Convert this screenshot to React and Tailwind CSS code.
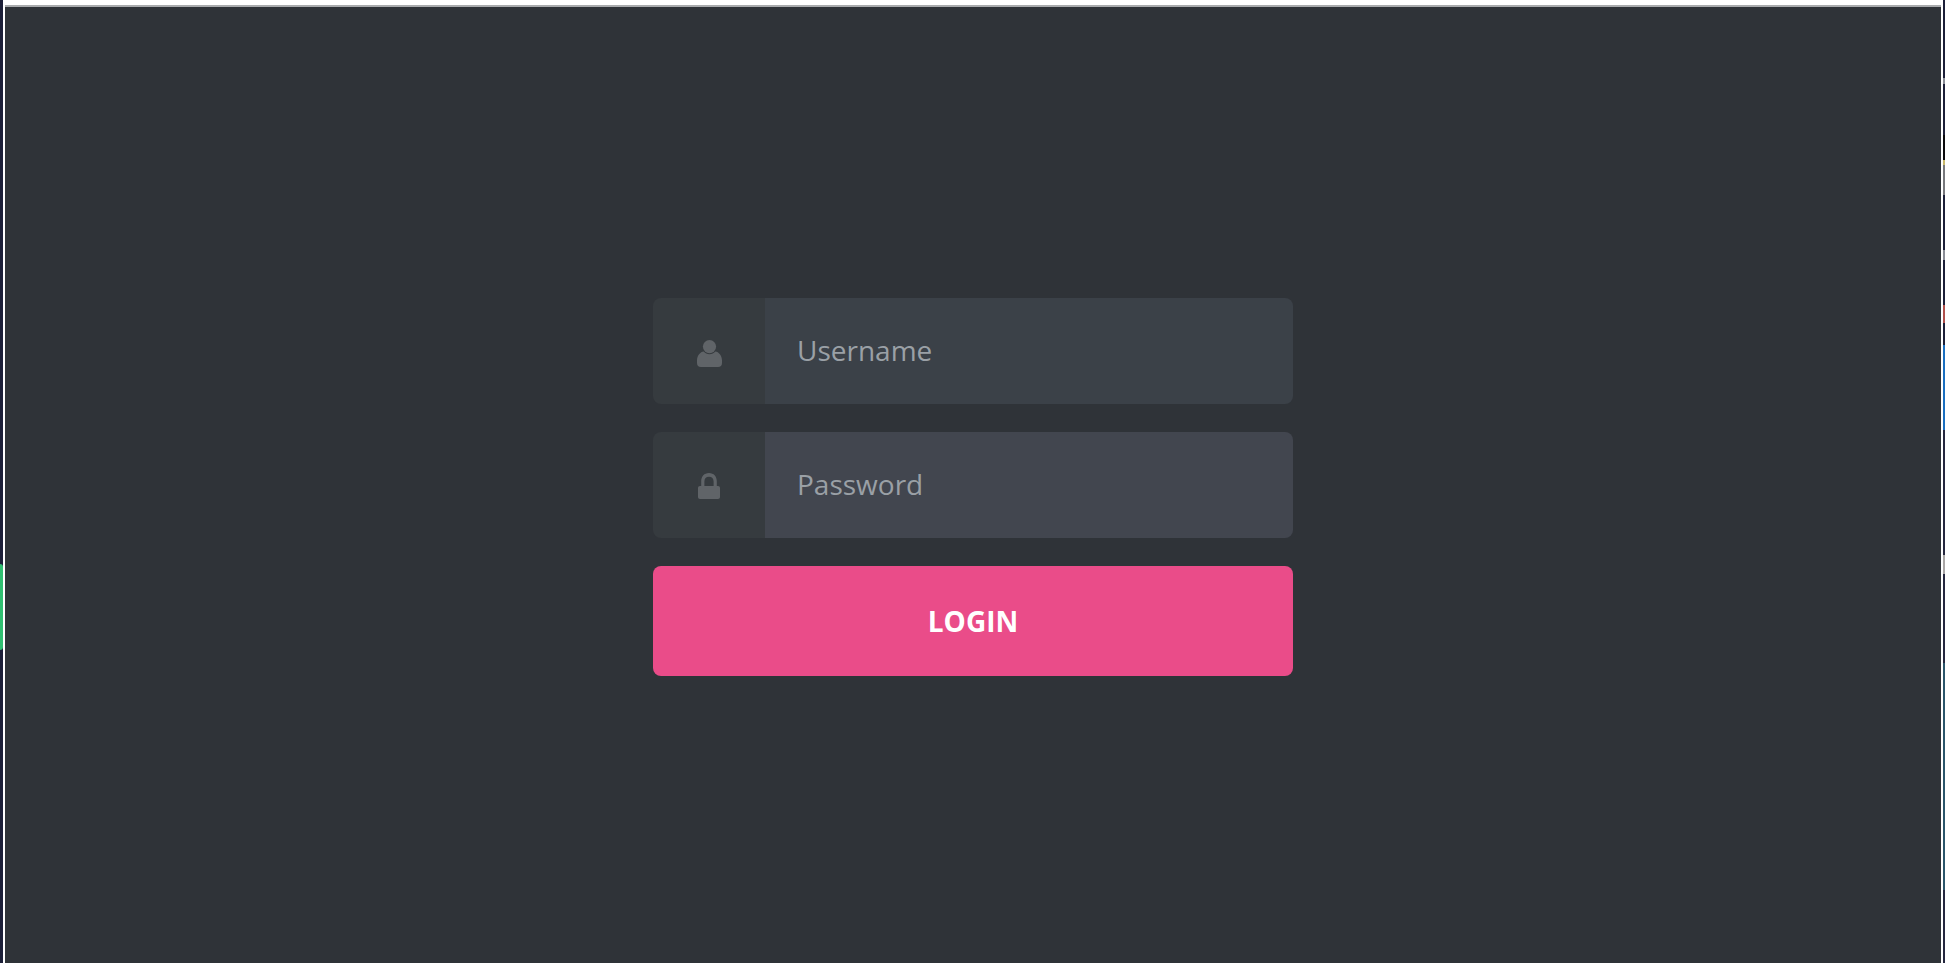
const rightStrip = [
  ["h-[78px]", "bg-[#1c1f38]"],
  ["h-[6px]", "bg-[#8a8d96]"],
  ["h-[51px]", "bg-[#1c1f38]"],
  ["h-[25px]", "bg-[#0a0a0c]"],
  ["h-[5px]", "bg-[#c9b96a]"],
  ["h-[30px]", "bg-[#77787c]"],
  ["h-[55px]", "bg-[#1c1f38]"],
  ["h-[10px]", "bg-[#8a8d96]"],
  ["h-[45px]", "bg-[#1c1f38]"],
  ["h-[18px]", "bg-[#b0504c]"],
  ["h-[22px]", "bg-[#1c1f38]"],
  ["h-[85px]", "bg-[#1b6fc0]"],
  ["h-[125px]", "bg-[#25273f]"],
  ["h-[19px]", "bg-[#a9a6a6]"],
  ["h-[89px]", "bg-[#25273f]"],
  ["h-[227px]", "bg-[#2c566b]"],
  ["h-[73px]", "bg-[#25273f]"],
];

function UserIcon() {
  return (
    <svg width="25" height="27" viewBox="0 0 25 27" className="text-[#606468] mt-[4px]" fill="currentColor">
      <circle cx="12.5" cy="6.6" r="6.6" />
      <path d="M0 20.5C0 15.6 3.4 12 6.6 11.6C8 13.2 10.2 14.2 12.5 14.2C14.8 14.2 17 13.2 18.4 11.6C21.6 12 25 15.6 25 20.5V23C25 25.6 23.6 27 21 27H4C1.4 27 0 25.6 0 23Z" />
    </svg>
  );
}

function LockIcon() {
  return (
    <svg width="22" height="26" viewBox="0 0 22 26" className="text-[#606468] mt-[1px]" fill="currentColor">
      <path
        fillRule="evenodd"
        d="M11 0C6.2 0 3.2 3.6 3.2 8V13H2C0.8 13 0 13.8 0 15V24C0 25.2 0.8 26 2 26H20C21.2 26 22 25.2 22 24V15C22 13.8 21.2 13 20 13H18.8V8C18.8 3.6 15.8 0 11 0ZM11 3.8C14 3.8 15.6 5.8 15.6 8.6V13H6.4V8.6C6.4 5.8 8 3.8 11 3.8Z"
      />
    </svg>
  );
}

function Field({ icon, placeholder, type, inputBg }) {
  return (
    <div className="flex h-[106px] rounded-[8px] overflow-hidden">
      <div className="w-[112px] bg-[#363b3f] flex items-center justify-center">
        {icon}
      </div>
      <input
        type={type}
        placeholder={placeholder}
        className={`flex-1 min-w-0 pl-[32px] pb-[3px] text-[28px] text-[#9aa0a6] placeholder:text-[#9aa0a6] outline-none ${inputBg}`}
      />
    </div>
  );
}

export default function App() {
  return (
    <div className="flex h-[963px] w-full overflow-hidden bg-[#2f3338] font-['Open_Sans',sans-serif]">
      {/* left edge of the window behind */}
      <div className="w-[3px] flex flex-col bg-[#1c1f38]">
        <div className="h-[564px]" />
        <div className="h-[86px] rounded-r-[3px] bg-[#2fbf71]" />
      </div>
      <div className="w-[2px] bg-white" />

      <main className="flex-1 flex flex-col">
        <div className="h-[5px] bg-white" />
        <div className="h-[2px] bg-[#a9abad]" />
        <div className="flex flex-col gap-[28px] w-[640px] mx-auto pt-[291px]">
          <Field icon={<UserIcon />} placeholder="Username" type="text" inputBg="bg-[#3b4148]" />
          <Field icon={<LockIcon />} placeholder="Password" type="password" inputBg="bg-[#42464f]" />
          <button className="h-[110px] pb-[1px] rounded-[8px] bg-[#ea4c89] text-white text-[28px] font-bold uppercase">
            Login
          </button>
        </div>
      </main>

      <div className="w-[2px] bg-white" />
      <div className="w-[2px] flex flex-col">
        {rightStrip.map(([h, bg], i) => (
          <div key={i} className={`${h} ${bg}`} />
        ))}
      </div>
    </div>
  );
}
